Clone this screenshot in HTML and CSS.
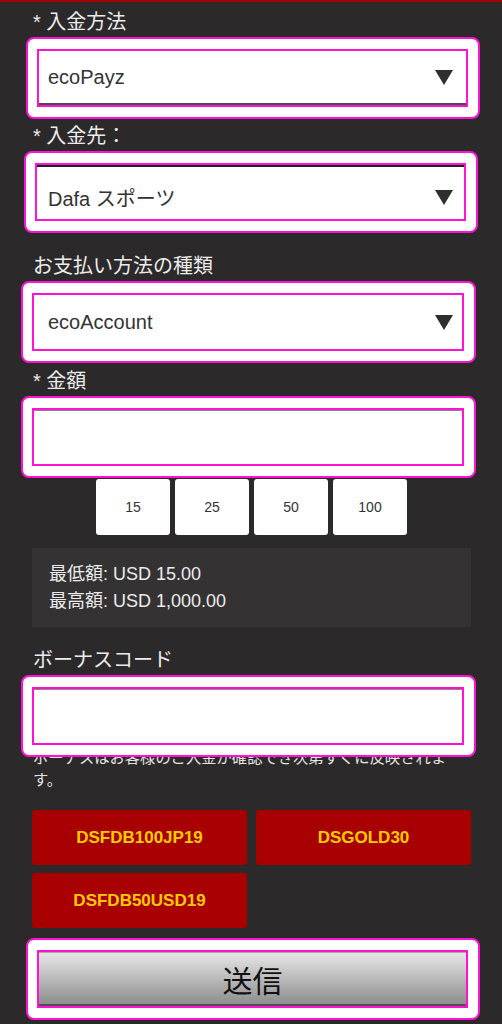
FILE: index.html
```html
<!DOCTYPE html>
<html lang="ja">
  <head>
    <meta charset="UTF-8" />
    <meta name="viewport" content="width=device-width, initial-scale=1.0" />
    <title>入金</title>
    <link rel="stylesheet" href="styles.css">
  </head>
  <body>
    <div id="deposit">
      <div class="field field-1">
        <div class="field-label">* 入金方法</div>
        <div class="hl hl-a">
          <div class="hl-inner">
            <div class="select sel-line-bottom">
              <span>ecoPayz</span>
              <svg class="caret" viewBox="0 0 18 15"><polygon points="0,0 18,0 9,15" /></svg>
            </div>
          </div>
        </div>
      </div>

      <div class="field field-2">
        <div class="field-label">* 入金先：</div>
        <div class="hl hl-b">
          <div class="hl-inner">
            <div class="select sel-line-top">
              <span>Dafa スポーツ</span>
              <svg class="caret" viewBox="0 0 18 15"><polygon points="0,0 18,0 9,15" /></svg>
            </div>
          </div>
        </div>
      </div>

      <div class="field field-3">
        <div class="field-label">お支払い方法の種類</div>
        <div class="hl hl-c">
          <div class="hl-inner">
            <div class="select">
              <span>ecoAccount</span>
              <svg class="caret" viewBox="0 0 18 15"><polygon points="0,0 18,0 9,15" /></svg>
            </div>
          </div>
        </div>
      </div>

      <div class="field field-4">
        <div class="field-label">* 金額</div>
        <div class="hl hl-c">
          <div class="hl-inner">
            <input class="text-input" type="text" />
          </div>
        </div>
      </div>

      <div class="amounts">
        <button class="amount-btn">15</button>
        <button class="amount-btn">25</button>
        <button class="amount-btn">50</button>
        <button class="amount-btn">100</button>
      </div>

      <div class="limits">
        <p>最低額: USD 15.00</p>
        <p>最高額: USD 1,000.00</p>
      </div>

      <div class="field field-5">
        <div class="field-label">ボーナスコード</div>
        <div class="hl hl-c">
          <div class="hl-inner">
            <input class="text-input" type="text" />
          </div>
        </div>
      </div>
      <p class="bonus-note">ボーナスはお客様のご入金が確認でき次第すぐに反映されま<br />す。</p>

      <div class="codes">
        <button class="code-btn">DSFDB100JP19</button>
        <button class="code-btn">DSGOLD30</button>
        <button class="code-btn">DSFDB50USD19</button>
      </div>

      <div class="hl hl-a submit-wrap">
        <div class="hl-inner">
          <button type="submit" class="submit-btn">送信</button>
        </div>
      </div>
    </div>
  </body>
</html>
```

FILE: styles.css
```css
* {
  box-sizing: border-box;
  margin: 0;
  padding: 0;
}
body {
  font-family: "Liberation Sans", "Noto Sans CJK JP", sans-serif;
  background-color: #2b292a;
  border-top: 2px solid #a40000;
  height: 1024px;
  overflow: hidden;
}
#deposit {
  padding: 8px 31px 0 32px;
}

.field-label {
  font-size: 20px;
  line-height: 24px;
  color: #ececec;
  margin-bottom: 3px;
  padding-left: 1px;
}
.field-2 {
  margin-top: 5px;
}
.field-3 {
  margin-top: 21px;
}
.field-4 {
  margin-top: 6px;
}
.field-5 {
  margin-top: 21px;
}

/* pink highlight boxes around the inputs */
.hl {
  position: relative;
  z-index: 1;
  background-color: #fff;
  border: 2px solid #ff12d4;
  border-radius: 8px;
  padding: 10px 10px 10px 9px;
}
.hl-a {
  margin-left: -6px;
  margin-right: -9px;
}
.hl-b {
  margin-left: -8px;
  margin-right: -7px;
}
.hl-c {
  margin-left: -11px;
  margin-right: -5px;
}
.hl-inner {
  border: 2px solid #ff12d4;
  height: 58px;
}

.select {
  display: flex;
  align-items: center;
  justify-content: space-between;
  height: 100%;
  background-color: #fff;
  color: #333;
  font-size: 20px;
}
.hl-a .select {
  padding: 0 13px 0 9px;
}
.hl-b .select {
  padding: 0 11px 0 11px;
}
.hl-c .select {
  padding: 0 9px 0 14px;
}
.sel-line-bottom {
  border-bottom: 2px solid #4a4a4a;
}
.sel-line-top {
  border-top: 2px solid #1e1e1e;
  padding-top: 8px !important;
}
.caret {
  width: 18px;
  height: 15px;
  fill: #2e2e2e;
}

.text-input {
  display: block;
  width: 100%;
  height: 100%;
  border: none;
  border-top: 1px solid #8a8a8a;
  outline: none;
  background-color: #fff;
}

.amounts {
  display: flex;
  justify-content: center;
  gap: 5px;
  margin-top: 1px;
}
.amount-btn {
  width: 74px;
  height: 56px;
  border: none;
  border-radius: 3px;
  background-color: #fff;
  color: #333;
  font-family: inherit;
  font-size: 14px;
}

.limits {
  margin-top: 13px;
  background-color: #343233;
  padding: 13px 17px 12px;
  color: #ececec;
  font-size: 18px;
  line-height: 27px;
}

.bonus-note {
  margin-top: -10px;
  padding-left: 1px;
  color: #e4e4e4;
  font-size: 15.3px;
  line-height: 22px;
}

.codes {
  display: grid;
  grid-template-columns: 1fr 1fr;
  gap: 8px 9px;
  margin-top: 19px;
}
.code-btn {
  height: 55px;
  border: none;
  border-radius: 3px;
  background-color: #a80000;
  color: #ffcc00;
  font-family: inherit;
  font-size: 17px;
  font-weight: bold;
}

.submit-wrap {
  margin-top: 10px;
}
.submit-btn {
  display: block;
  width: 100%;
  height: 100%;
  border: none;
  border-top: 1px solid #a8a8a8;
  border-bottom: 2px solid #505050;
  background: linear-gradient(#e6e6e6, #8e8e8e);
  color: #111;
  font-family: inherit;
  font-size: 30px;
}
```
